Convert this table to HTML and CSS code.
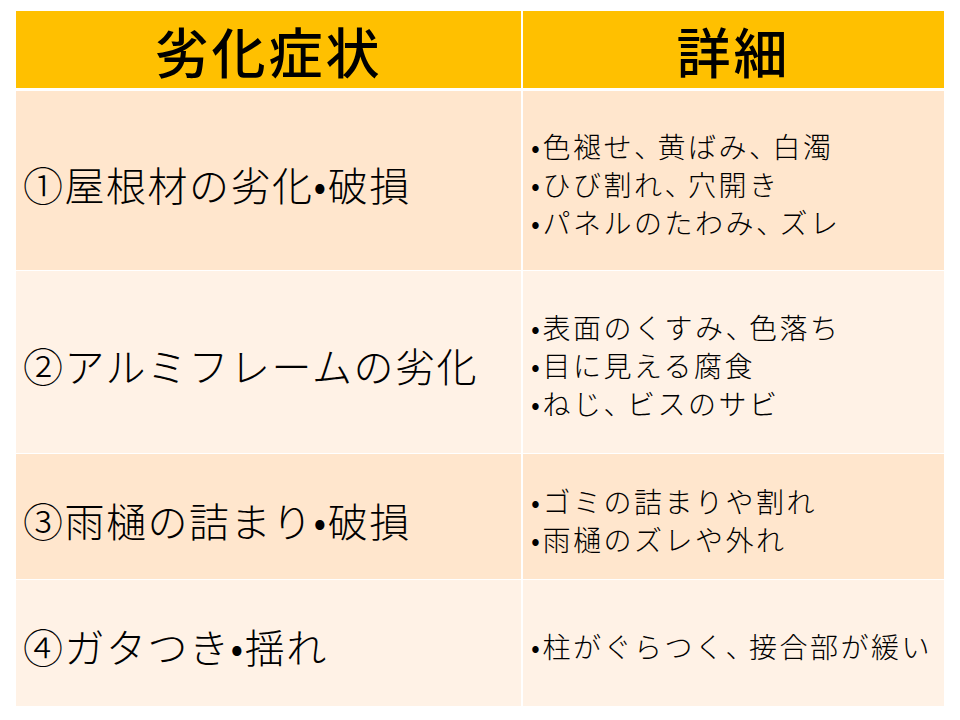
FILE: index.html
```html
<!DOCTYPE html>
<html lang="ja">
<head>
<meta charset="utf-8">
<title>劣化症状</title>
<link rel="stylesheet" href="styles.css">
</head>
<body>
<div class="table">
  <div class="cell head">劣化症状</div>
  <div class="cell head">詳細</div>

  <div class="cell name odd">①屋根材の劣化•破損</div>
  <div class="cell detail odd">
    <div class="line">•色褪せ<span class="comma">、</span>黄ばみ<span class="comma">、</span>白濁</div>
    <div class="line">•ひび割れ<span class="comma">、</span>穴開き</div>
    <div class="line">•パネルのたわみ<span class="comma">、</span>ズレ</div>
  </div>

  <div class="cell name even">②アルミフレームの劣化</div>
  <div class="cell detail even">
    <div class="line">•表面のくすみ<span class="comma">、</span>色落ち</div>
    <div class="line">•目に見える腐食</div>
    <div class="line">•ねじ<span class="comma">、</span>ビスのサビ</div>
  </div>

  <div class="cell name odd">③雨樋の詰まり•破損</div>
  <div class="cell detail odd">
    <div class="line">•ゴミの詰まりや割れ</div>
    <div class="line">•雨樋のズレや外れ</div>
  </div>

  <div class="cell name even">④ガタつき•揺れ</div>
  <div class="cell detail even">
    <div class="line">•柱がぐらつく<span class="comma">、</span>接合部が緩い</div>
  </div>
</div>
</body>
</html>
```

FILE: styles.css
```css
html, body {
  margin: 0;
  padding: 0;
  background: #ffffff;
}

body {
  padding: 11px 16px;
  font-family: "Noto Sans CJK JP", "Noto Sans", sans-serif;
  color: #000000;
}

.table {
  display: grid;
  grid-template-columns: 505px 421px;
  grid-template-rows: 79px 179px 182px 125px 126px;
  column-gap: 2px;
  row-gap: 1px;
  width: 928px;
}

.cell {
  display: flex;
  flex-direction: column;
  justify-content: center;
}

.head {
  background: #ffc000;
  align-items: center;
  font-size: 54px;
  letter-spacing: 3px;
  line-height: 1;
  font-weight: 500;
  margin-bottom: 2px;
  padding-top: 2px;
}

.odd {
  background: #ffe6cd;
}

.even {
  background: #fff2e6;
}

.name {
  padding-left: 7px;
  padding-top: 6px;
  font-size: 40px;
  letter-spacing: 1.5px;
  line-height: 1;
  font-weight: 300;
}

.detail {
  padding-left: 8px;
  padding-top: 6px;
  font-size: 28px;
  letter-spacing: 2.5px;
  line-height: 38px;
  font-weight: 300;
}

.line {
  white-space: nowrap;
}

.comma {
  letter-spacing: -4.5px;
}
```
